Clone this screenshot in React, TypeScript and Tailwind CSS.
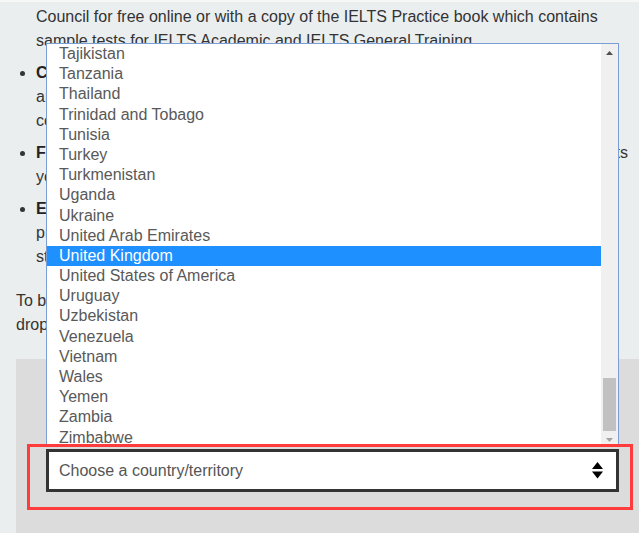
import React from "react";

const countries = [
  "Tajikistan",
  "Tanzania",
  "Thailand",
  "Trinidad and Tobago",
  "Tunisia",
  "Turkey",
  "Turkmenistan",
  "Uganda",
  "Ukraine",
  "United Arab Emirates",
  "United Kingdom",
  "United States of America",
  "Uruguay",
  "Uzbekistan",
  "Venezuela",
  "Vietnam",
  "Wales",
  "Yemen",
  "Zambia",
  "Zimbabwe",
];

export default function App() {
  return (
    <div
      className="relative h-[533px] w-[639px] overflow-hidden bg-[#eaeeef] border-t-2 border-[#f6f8f8] flex flex-col text-[16px] text-[#333]"
      style={{ fontFamily: '"Liberation Sans", Arial, sans-serif' }}
    >
      <div className="pt-[3px] pl-4 pr-[11px] leading-[24px] whitespace-nowrap overflow-hidden">
        <ul className="list-disc pl-5 marker:text-[#333]">
          <li className="list-none">
            Council for free online or with a copy of the IELTS Practice book which contains
            <br />
            sample tests for IELTS Academic and IELTS General Training.
          </li>
          <li className="mt-2">
            <b className="text-[#222]">Cambridge English:</b> official IELTS practice books with tests
            <br />
            are available from bookshops and online retailers around the world, and online
            <br />
            courses can help you prepare.
          </li>
          <li className="mt-2">
            <span className="block [text-align-last:justify] text-justify">
              <b className="text-[#222]">Free practice materials:</b> we offer a range of free practice tests
            </span>
            you can use to prepare at home.
          </li>
          <li className="mt-2">
            <b className="text-[#222]">Events and webinars:</b> join our free webinars and events
            <br />
            presented by IELTS experts, who share tips on how to
            <br />
            structure your answers.
          </li>
        </ul>
        <p className="mt-5">
          To book your IELTS test, choose the country or territory from the
          <br />
          drop-down menu below.
        </p>
      </div>

      <div className="ml-4 mt-[22px] flex-1 bg-[#dcdcdc] pl-[11px] pt-[85px]">
        <div className="w-[606px] h-[66px] border-[3px] border-[#ff3b3b] pl-4 pt-[2px]">
          <div className="w-[573px] h-[43px] border-[3px] border-[#333] bg-white flex items-center justify-between pl-[10px] pr-[13px] text-[#555]">
            <span>Choose a country/territory</span>
            <svg width="11" height="17" viewBox="0 0 11 17" aria-hidden="true">
              <polygon points="5.5,0 11,7 0,7" fill="#000" />
              <polygon points="0,9.5 11,9.5 5.5,16.5" fill="#000" />
            </svg>
          </div>
        </div>
      </div>

      <div className="absolute left-[46px] top-[41px] w-[573px] h-[401px] overflow-hidden border border-b-0 border-[#7b9fd5] bg-white">
        <div className="flex h-[404px]">
          <ul className="flex-1 text-[#595959]">
            {countries.map((c) => (
              <li
                key={c}
                className={
                  c === "United Kingdom"
                    ? "h-[20.2px] leading-[20.2px] pl-3 bg-[#1e90ff] text-white"
                    : "h-[20.2px] leading-[20.2px] pl-3"
                }
              >
                {c}
              </li>
            ))}
          </ul>
          <div className="w-[17px] bg-[#f0f0f0] flex flex-col">
            <div className="h-[17px] flex items-center justify-center">
              <svg width="7" height="4" viewBox="0 0 7 4" aria-hidden="true">
                <polygon points="3.5,0 7,4 0,4" fill="#505050" />
              </svg>
            </div>
            <div className="flex-1 flex flex-col justify-end items-center">
              <div className="w-[13px] h-[53px] bg-[#c1c1c1]" />
            </div>
            <div className="h-[17px] flex items-center justify-center">
              <svg width="7" height="4" viewBox="0 0 7 4" aria-hidden="true">
                <polygon points="0,0 7,0 3.5,4" fill="#a3a3a3" />
              </svg>
            </div>
          </div>
        </div>
      </div>
    </div>
  );
}
